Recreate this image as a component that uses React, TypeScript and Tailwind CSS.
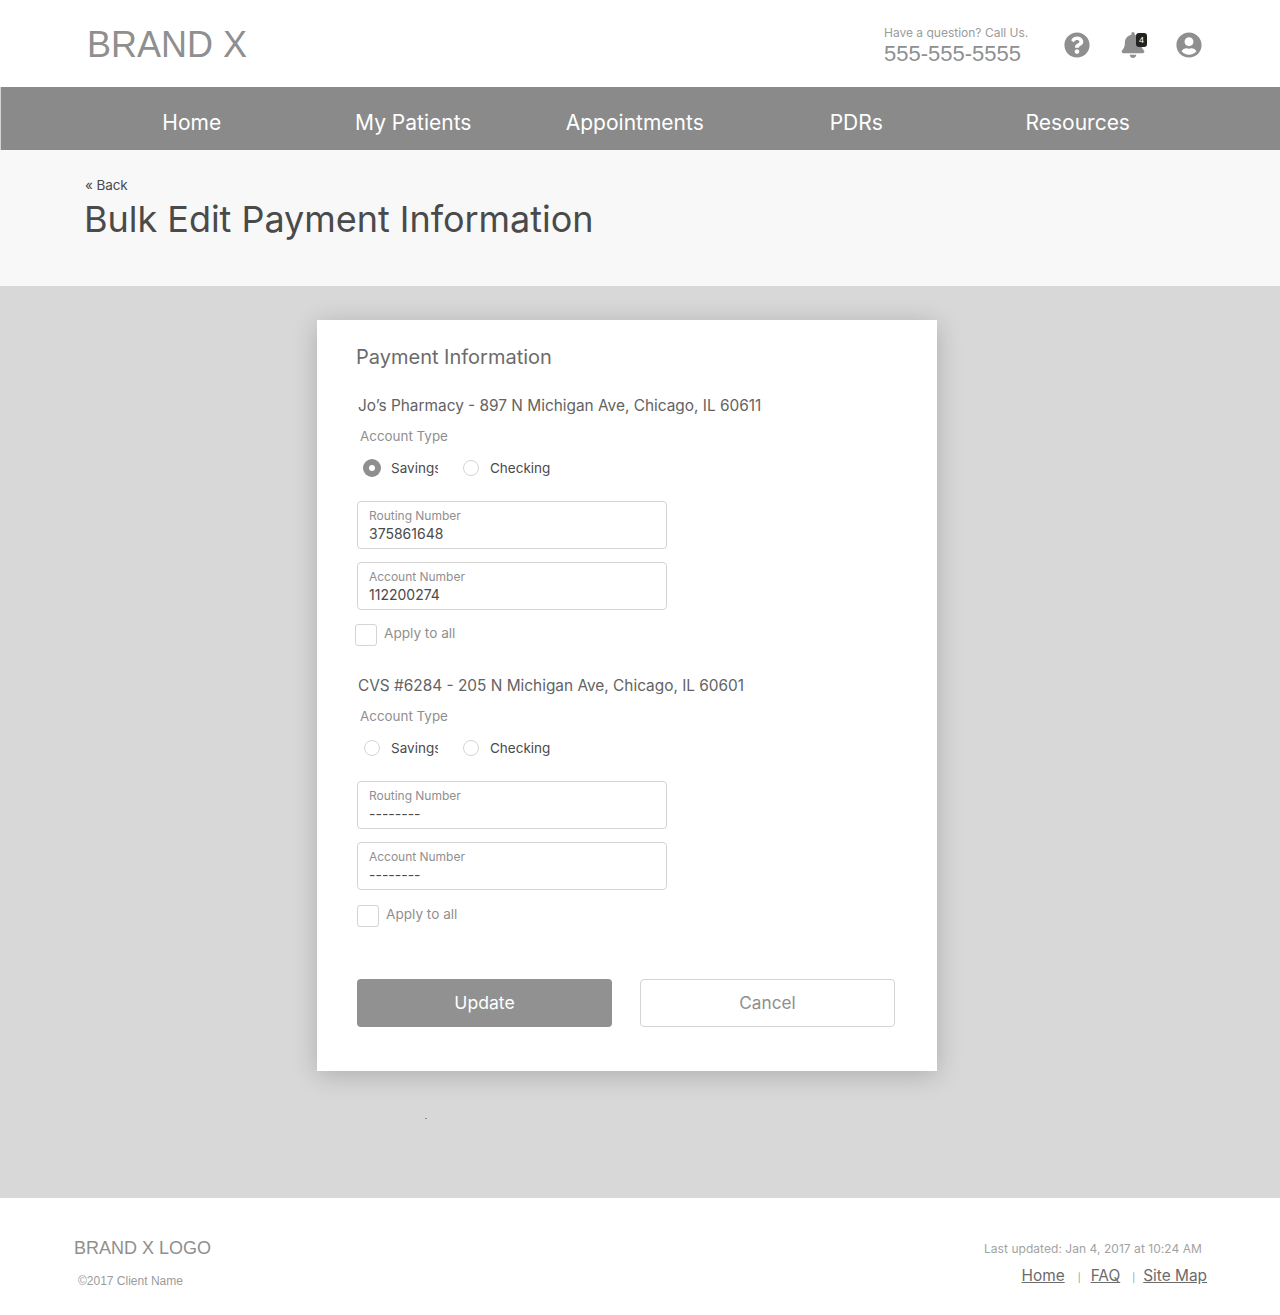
import React from "react";
import { FaQuestionCircle, FaBell, FaUserCircle } from "react-icons/fa";

const inter = "font-['Inter','Noto_Sans',sans-serif]";
const helv = "font-['Liberation_Sans',Arial,sans-serif]";

function Field({ label, value, className = "" }: { label: string; value: string; className?: string }) {
  return (
    <div className={`w-[310px] h-[48px] border border-[#d4d4d4] rounded-[4px] pl-[11px] pt-[6px] ${className}`}>
      <div className="text-[12px] leading-[16px] text-[#8f8f8f] tracking-[-0.02px]">{label}</div>
      <div className="text-[14px] leading-[20px] text-[#4a4a4a]">{value}</div>
    </div>
  );
}

function Radio({ checked, label, clip }: { checked?: boolean; label: string; clip?: boolean }) {
  return (
    <div className="flex items-center">
      {checked ? (
        <span className="w-[18px] h-[18px] rounded-full bg-[#8f8f8f] flex items-center justify-center">
          <span className="w-[6px] h-[6px] rounded-full bg-white" />
        </span>
      ) : (
        <span className="w-[16px] h-[16px] mx-[1px] rounded-full border border-[#d4d4d4] bg-white" />
      )}
      <span className={`ml-[10px] text-[13.5px] leading-[20px] text-[#4a4a4a] whitespace-nowrap ${clip ? "w-[47px] overflow-hidden" : ""}`}>
        {label}
      </span>
    </div>
  );
}

function Pharmacy({ title, checked, routing, account, checkOffset, checkTop }: { title: string; checked?: boolean; routing: string; account: string; checkOffset: string; checkTop: string }) {
  return (
    <section>
      <h3 className="ml-[41px] text-[15.4px] leading-[24px] text-[#636363] whitespace-nowrap">{title}</h3>
      <div className="ml-[43px] mt-[8px] text-[13.4px] leading-[20px] text-[#8f8f8f]">Account Type</div>
      <div className="ml-[46px] mt-[12px] flex items-center gap-[24px] h-[20px]">
        <Radio checked={checked} label="Savings" clip />
        <Radio label="Checking" />
      </div>
      <Field className="ml-[40px] mt-[23px]" label="Routing Number" value={routing} />
      <Field className="ml-[40px] mt-[13px]" label="Account Number" value={account} />
      <div className={`flex items-start ${checkOffset} ${checkTop}`}>
        <span className="w-[22px] h-[22px] border border-[#d4d4d4] rounded-[3px] bg-white" />
        <span className="ml-[7px] -mt-[1px] text-[13.6px] leading-[20px] text-[#8f8f8f]">Apply to all</span>
      </div>
    </section>
  );
}

export default function App() {
  return (
    <div className={`${inter} w-[1280px] h-[1315px] flex flex-col bg-white overflow-hidden`}>
      <header className="h-[87px] flex items-center shrink-0">
        <div className={`${helv} ml-[87px] mt-[2px] text-[36px] leading-[44px] text-[#8f8f8f]`}>BRAND X</div>
        <div className="ml-auto w-[160px] mt-[5px]">
          <div className="text-[12px] leading-[16px] text-[#9b9b9b]">Have a question? Call Us.</div>
          <div className={`${helv} text-[22px] leading-[26px] text-[#8f8f8f]`}>555-555-5555</div>
        </div>
        <div className="flex items-center mr-[78px] ml-[20px] mt-[3px]">
          <FaQuestionCircle className="w-[26px] h-[26px] text-[#8f8f8f]" />
          <div className="relative ml-[30px]">
            <FaBell className="w-[26px] h-[26px] text-[#8f8f8f]" />
            <span className={`${helv} absolute top-[1px] right-[-1px] w-[11px] h-[14px] rounded-[3px] bg-[#222222] text-white text-[9px] leading-[14px] text-center`}>4</span>
          </div>
          <FaUserCircle className="w-[26px] h-[26px] text-[#8f8f8f] ml-[30px]" />
        </div>
      </header>

      <nav className="h-[63px] shrink-0 bg-[#8a8a8a] border-l border-[#d4d4d4] flex items-center pl-[80px] pt-[9px]">
        {["Home", "My Patients", "Appointments", "PDRs", "Resources"].map((t) => (
          <a key={t} className="w-[221.5px] text-center text-[21px] leading-[30px] text-white">{t}</a>
        ))}
      </nav>

      <div className="h-[136px] shrink-0 bg-[#f8f8f8] pl-[84px] pt-[26px]">
        <div className="ml-[1px] text-[13.5px] leading-[18px] text-[#4a4a4a] tracking-[-0.1px]">« Back</div>
        <h1 className="text-[36px] leading-[46px] text-[#4a4a4a] mt-[2px] tracking-[-0.03px]">Bulk Edit Payment Information</h1>
      </div>

      <main className="h-[912px] shrink-0 bg-[#d8d8d8] pl-[317px] pt-[34px] relative">
        <div className="w-[620px] h-[751px] bg-white shadow-[0_4px_24px_rgba(0,0,0,0.2)] pt-[24px]">
          <h2 className="ml-[39px] text-[20px] leading-[26px] text-[#6b6b6b]">Payment Information</h2>
          <div className="mt-[24px]">
            <Pharmacy title="Jo’s Pharmacy - 897 N Michigan Ave, Chicago, IL 60611" checked routing="375861648" account="112200274" checkOffset="ml-[38px]" checkTop="mt-[14px]" />
          </div>
          <div className="mt-[28px]">
            <Pharmacy title="CVS #6284 - 205 N Michigan Ave, Chicago, IL 60601" routing="--------" account="--------" checkOffset="ml-[40px]" checkTop="mt-[15px]" />
          </div>
          <div className="ml-[40px] mt-[52px] flex gap-[28px]">
            <button className="w-[255px] h-[48px] rounded-[4px] bg-[#919191] text-white text-[17.6px]">Update</button>
            <button className="w-[255px] h-[48px] rounded-[4px] bg-white border border-[#d4d4d4] text-[#8f8f8f] text-[17.2px]">Cancel</button>
          </div>
        </div>
        <span className="absolute left-[425px] top-[832px] w-[2px] h-[1px] bg-[#8f8f8f]" />
      </main>

      <footer className="flex-1 flex justify-between">
        <div className={`${helv} pl-[74px] pt-[40px]`}>
          <div className="text-[18px] leading-[21px] text-[#8f8f8f]">BRAND X LOGO</div>
          <div className="ml-[4px] mt-[15px] text-[12px] leading-[14px] text-[#9b9b9b]">©2017 Client Name</div>
        </div>
        <div className="pr-[73px] pt-[43px] flex flex-col items-end">
          <div className="mr-[5px] text-[12px] leading-[16px] text-[#a3a3a3] tracking-[0.05px]">Last updated: Jan 4, 2017 at 10:24 AM</div>
          <div className="mt-[9px] flex items-center text-[15.4px] leading-[20px] text-[#6b6b6b]">
            <a className="underline">Home</a>
            <span className="ml-[13px] mr-[10px] translate-y-[2px] text-[9px] text-[#8f8f8f]">|</span>
            <a className="underline">FAQ</a>
            <span className="ml-[12px] mr-[8px] translate-y-[2px] text-[9px] text-[#8f8f8f]">|</span>
            <a className="underline">Site Map</a>
          </div>
        </div>
      </footer>
    </div>
  );
}
